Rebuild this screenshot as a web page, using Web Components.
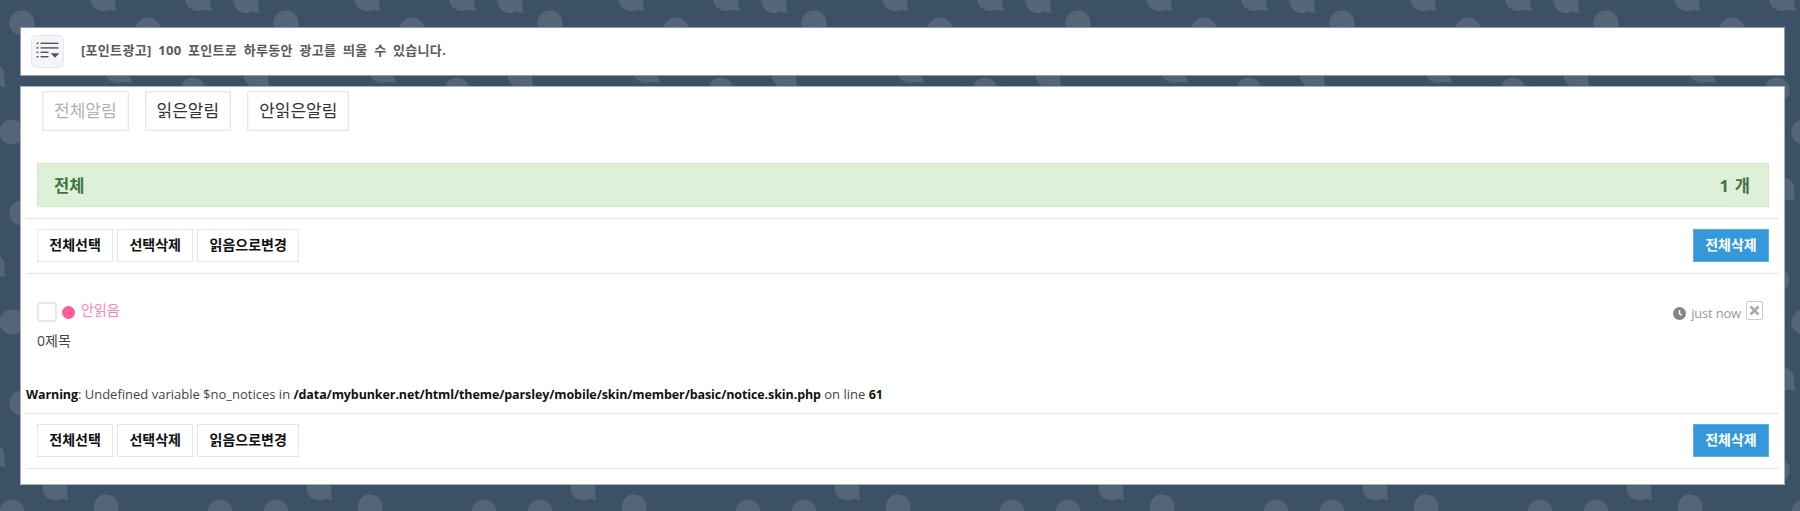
<!DOCTYPE html>
<html lang="ko">
<head>
<meta charset="utf-8">
<title>알림</title>
<style>
	html, body { margin: 0; padding: 0; }
	body { background: #3d5166; }
</style>
</head>
<body>
<member-page>
	<ad-bar>[포인트광고] 100 포인트로 하루동안 광고를 띄울 수 있습니다.</ad-bar>
	<content-panel>
		<notice-tabs>
			<tab-link active>전체알림</tab-link>
			<tab-link>읽은알림</tab-link>
			<tab-link>안읽은알림</tab-link>
		</notice-tabs>
		<count-bar count="1 개">전체</count-bar>
		<action-bar></action-bar>
		<notice-item time="just now">0제목</notice-item>
		<php-warning></php-warning>
		<action-bar></action-bar>
	</content-panel>
</member-page>

<script>
	const bubble = (x, y) => `<path d='M${x - 12.5} ${y}a12.5 12.5 0 1 1 24.4 3.8l1.6 7.2-7.4-1.4a12.5 12.5 0 0 1-18.6-9.6z'/>`;
	const dot = (x, y) => `<circle cx='${x}' cy='${y}' r='12.5'/>`;
	const tile = `<svg xmlns='http://www.w3.org/2000/svg' width='264' height='190'><g fill='white' fill-opacity='.115'>`
		+ [[22, 23], [12, 132], [148, 30], [220, 132], [106, 127], [193, 90]].map(p => dot(...p)).join('')
		+ [[103, 0], [103, 190], [198, 0], [198, 190], [246, 2], [246, 192], [55, 109], [118, 72], [256, 76], [-8, 76]].map(p => bubble(...p)).join('')
		+ `</g></svg>`;

	class MemberPage extends HTMLElement {
		constructor() {
			super();
			this.attachShadow({ mode: 'open' });
			this.shadowRoot.innerHTML = `
				<style>
					:host {
						display: block;
						box-sizing: border-box;
						height: 511px;
						overflow: hidden;
						padding: 27px 15px 0 20px;
						background-color: #3d5166;
						background-image: url("data:image/svg+xml,${encodeURIComponent(tile)}");
						font-family: "Open Sans", "Noto Sans CJK KR", sans-serif;
						font-size: 14px;
						color: #444;
					}
				</style>
				<slot></slot>
			`;
		}
	}

	class AdBar extends HTMLElement {
		constructor() {
			super();
			this.attachShadow({ mode: 'open' });
			this.shadowRoot.innerHTML = `
				<style>
					:host {
						display: flex;
						align-items: center;
						box-sizing: border-box;
						height: 49px;
						margin-bottom: 10px;
						padding: 0 10px;
						background: #fff;
						border: 1px solid #8d9bab;
					}
					.menu {
						display: block;
						box-sizing: border-box;
						width: 33px;
						height: 33px;
						margin-right: 17px;
						background: #f3f5f8;
						border: 1px solid #e6e9ed;
						border-radius: 5px;
					}
					svg { display: block; margin: -1px; }
					.text {
						margin-bottom: 5px;
						font-size: 13px;
						font-weight: 700;
						color: #5a5a5a;
						letter-spacing: .3px;
						word-spacing: 3px;
					}
				</style>
				<span class="menu">
					<svg width="33" height="33" viewBox="0 0 33 33" fill="#555">
						<rect x="5.5" y="7.6" width="2" height="1.4"/><rect x="9.5" y="7.6" width="18" height="1.4"/>
						<rect x="5.5" y="12.2" width="2" height="1.4"/><rect x="9.5" y="12.2" width="18" height="1.4"/>
						<rect x="5.5" y="16.6" width="2" height="1.4"/><rect x="9.5" y="16.6" width="8" height="1.4"/>
						<rect x="5.5" y="21" width="2" height="1.4"/><rect x="9.5" y="21" width="8" height="1.4"/>
						<path d="M19.6 18.2h8.8l-4.4 4.6z"/>
					</svg>
				</span>
				<span class="text"><slot></slot></span>
			`;
		}
	}

	class ContentPanel extends HTMLElement {
		constructor() {
			super();
			this.attachShadow({ mode: 'open' });
			this.shadowRoot.innerHTML = `
				<style>
					:host {
						display: block;
						box-sizing: border-box;
						height: 399px;
						padding: 4px 5px 0;
						background: #fff;
						border: 1px solid #a9b3bd;
					}
				</style>
				<slot></slot>
			`;
		}
	}

	class NoticeTabs extends HTMLElement {
		constructor() {
			super();
			this.attachShadow({ mode: 'open' });
			this.shadowRoot.innerHTML = `
				<style>
					:host {
						display: flex;
						gap: 16px;
						padding-left: 16px;
						margin-bottom: 32px;
					}
				</style>
				<slot></slot>
			`;
		}
	}

	class TabLink extends HTMLElement {
		constructor() {
			super();
			this.attachShadow({ mode: 'open' });
			this.shadowRoot.innerHTML = `
				<style>
					:host {
						display: block;
						box-sizing: border-box;
						height: 40px;
						padding: 0 11px;
						line-height: 37px;
						font-size: 17px;
						color: #333;
						border: 1px solid #e6e8ea;
						box-shadow: inset 0 0 0 .5px #eef0f2;
					}
					:host([active]) { color: #a8b3bc; }
				</style>
				<slot></slot>
			`;
		}
	}

	class CountBar extends HTMLElement {
		constructor() {
			super();
			this.attachShadow({ mode: 'open' });
			this.shadowRoot.innerHTML = `
				<style>
					:host {
						display: flex;
						justify-content: space-between;
						align-items: center;
						box-sizing: border-box;
						height: 44px;
						margin: 0 10px 11px 11px;
						padding: 0 18px 0 16px;
						background: #dff0d8;
						border: 1px solid #d6e9c6;
						color: #3c763d;
						font-size: 16.5px;
						font-weight: 700;
						word-spacing: 1.5px;
					}
				</style>
				<span><slot></slot></span>
				<span class="count"></span>
			`;
			this.shadowRoot.querySelector('.count').textContent = this.getAttribute('count');
		}
	}

	class ActionBtn extends HTMLElement {
		constructor() {
			super();
			this.attachShadow({ mode: 'open' });
			this.shadowRoot.innerHTML = `
				<style>
					:host {
						display: block;
						box-sizing: border-box;
						height: 33px;
						padding: 0 11.3px;
						line-height: 30px;
						font-size: 14px;
						font-weight: 700;
						color: #111;
						background: #fff;
						border: 1px solid #e4e6e8;
					}
					:host([primary]) {
						color: #fff;
						background: #3498db;
						border-color: #5aaee4;
					}
				</style>
				<slot></slot>
			`;
		}
	}

	class ActionBar extends HTMLElement {
		constructor() {
			super();
			this.attachShadow({ mode: 'open' });
			this.shadowRoot.innerHTML = `
				<style>
					:host {
						display: flex;
						gap: 4px;
						box-sizing: border-box;
						height: 56px;
						padding: 10px 10px 0 11px;
						border-top: 1px solid #e5e5e5;
						border-bottom: 1px solid #e5e5e5;
					}
					.fill { flex: 1; }
				</style>
				<action-btn>전체선택</action-btn>
				<action-btn>선택삭제</action-btn>
				<action-btn>읽음으로변경</action-btn>
				<span class="fill"></span>
				<action-btn primary>전체삭제</action-btn>
			`;
		}
	}

	class NoticeItem extends HTMLElement {
		constructor() {
			super();
			this.attachShadow({ mode: 'open' });
			this.shadowRoot.innerHTML = `
				<style>
					:host {
						display: block;
						box-sizing: border-box;
						height: 110px;
						padding: 28px 16px 0 11px;
					}
					.head { display: flex; align-items: center; height: 20px; }
					.check {
						box-sizing: border-box;
						width: 20px;
						height: 20px;
						margin-right: 5px;
						border: 2px solid #e6e7ee;
						border-radius: 4px;
					}
					.dot {
						width: 13px;
						height: 13px;
						margin-right: 6px;
						border-radius: 50%;
						background: #ff5c93;
					}
					.state { margin-bottom: 6px; color: #ff85ad; font-size: 14px; }
					.fill { flex: 1; }
					.clock { margin: 3px 5px 0 0; }
					.time { margin: 2px 5px 0 0; color: #999; font-size: 13px; letter-spacing: -.2px; }
					.close {
						display: block;
						box-sizing: border-box;
						width: 17px;
						height: 19px;
						margin-top: -3px;
						border: 1px solid #ccc;
						border-radius: 2px;
					}
					.close svg { display: block; margin: 3px 2px; }
					.title { margin-top: 9px; line-height: 20px; color: #444; font-size: 14px; }
				</style>
				<div class="head">
					<span class="check"></span>
					<span class="dot"></span>
					<span class="state">안읽음</span>
					<span class="fill"></span>
					<svg class="clock" width="13" height="13" viewBox="0 0 13 13">
						<circle cx="6.5" cy="6.5" r="6.5" fill="#858585"/>
						<path d="M6.5 3v3.8l2.4 1.4" fill="none" stroke="#fff" stroke-width="1.5"/>
					</svg>
					<span class="time"></span>
					<span class="close">
						<svg width="11" height="11" viewBox="0 0 11 11"><path d="M1.5 1.5l8 8M9.5 1.5l-8 8" stroke="#aaa" stroke-width="2.6"/></svg>
					</span>
				</div>
				<div class="title"><slot></slot></div>
			`;
			this.shadowRoot.querySelector('.time').textContent = this.getAttribute('time');
		}
	}

	class PhpWarning extends HTMLElement {
		constructor() {
			super();
			this.attachShadow({ mode: 'open' });
			this.shadowRoot.innerHTML = `
				<style>
					:host {
						display: block;
						height: 29px;
						line-height: 20px;
						font-size: 13px;
						color: #444;
					}
					b { color: #111; font-size: 12.5px; letter-spacing: -.1px; }
				</style>
				<b>Warning</b>: Undefined variable $no_notices in <b>/data/mybunker.net/html/theme/parsley/mobile/skin/member/basic/notice.skin.php</b> on line <b>61</b>
			`;
		}
	}

	customElements.define('member-page', MemberPage);
	customElements.define('ad-bar', AdBar);
	customElements.define('content-panel', ContentPanel);
	customElements.define('notice-tabs', NoticeTabs);
	customElements.define('tab-link', TabLink);
	customElements.define('count-bar', CountBar);
	customElements.define('action-btn', ActionBtn);
	customElements.define('action-bar', ActionBar);
	customElements.define('notice-item', NoticeItem);
	customElements.define('php-warning', PhpWarning);
</script>
</body>
</html>
